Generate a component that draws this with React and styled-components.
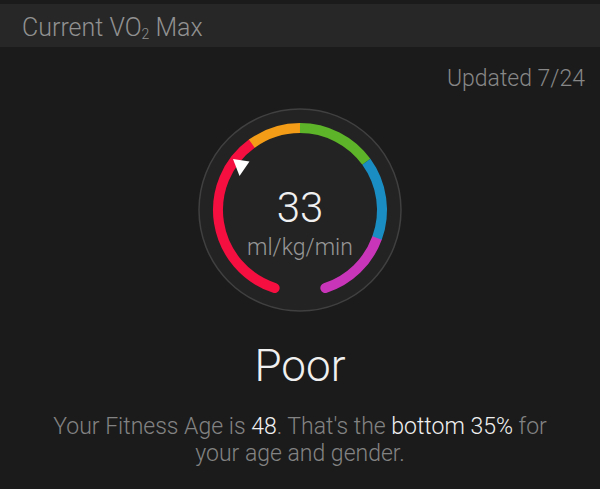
import React from 'react'
import styled, { createGlobalStyle } from 'styled-components'

const GlobalStyle = createGlobalStyle`
  html, body {
    margin: 0;
    padding: 0;
    background: #1b1b1b;
  }
  body {
    font-family: Roboto, 'Noto Sans', 'Liberation Sans', sans-serif;
    font-weight: 300;
    -webkit-font-smoothing: antialiased;
  }
`

const CX = 105
const CY = 105
const R = 82

const point = (deg) => {
  const a = (deg * Math.PI) / 180
  return [CX + R * Math.sin(a), CY - R * Math.cos(a)]
}

const arcPath = (from, to) => {
  const [x1, y1] = point(from)
  const [x2, y2] = point(to)
  const large = to - from > 180 ? 1 : 0
  return `M ${x1.toFixed(2)} ${y1.toFixed(2)} A ${R} ${R} 0 ${large} 1 ${x2.toFixed(2)} ${y2.toFixed(2)}`
}

// zones clockwise from top, in degrees
const zones = [
  { from: -162, to: -36, color: '#f50f40', cap: 'round' },
  { from: 110, to: 162, color: '#c935b9', cap: 'round' },
  { from: -36, to: 0, color: '#f39c17', cap: 'butt' },
  { from: 0, to: 54, color: '#5db428', cap: 'butt' },
  { from: 54, to: 110, color: '#1a8ec3', cap: 'butt' },
]

const Page = styled.div`
  padding-top: 4px;
  width: 600px;
  min-height: 485px;
  background: #1b1b1b;
`

const Header = styled.header`
  box-sizing: border-box;
  height: 43px;
  padding: 12px 0 0 22px;
  background: #272727;
  color: #919191;
  font-size: 25px;
  line-height: 24px;

  sub {
    font-size: 14px;
    line-height: 0;
    vertical-align: -3px;
  }
`

const Updated = styled.div`
  margin-top: 19px;
  padding-right: 15px;
  text-align: right;
  color: #878787;
  font-size: 23px;
  line-height: 26px;
`

const Gauge = styled.div`
  display: grid;
  justify-content: center;
  margin-top: 13px;

  > * {
    grid-area: 1 / 1;
  }
`

const Readout = styled.div`
  align-self: start;
  padding-top: 82px;
  display: flex;
  flex-direction: column;
  align-items: center;
`

const Value = styled.div`
  color: #f0f0f0;
  font-size: 42px;
  line-height: 42px;
`

const Unit = styled.div`
  margin-top: 6px;
  color: #969696;
  font-size: 23px;
  line-height: 26px;
`

const Rating = styled.div`
  margin-top: 26px;
  text-align: center;
  color: #f0f0f0;
  font-size: 44px;
  line-height: 50px;
`

const Summary = styled.p`
  margin: 22px 0 0;
  padding: 0 46px;
  text-align: center;
  color: #838383;
  font-size: 23px;
  line-height: 27px;

  b {
    font-weight: 300;
    color: #f0f0f0;
  }
`

const Dial = () => (
  <svg width='210' height='210' viewBox='0 0 210 210'>
    <circle cx={CX} cy={CY} r='101' fill='#232323' stroke='#404040' strokeWidth='1.5' />
    {zones.map((z, index) => (
      <path
        key={index}
        d={arcPath(z.from, z.to)}
        fill='none'
        stroke={z.color}
        strokeWidth='10'
        strokeLinecap={z.cap}
      />
    ))}
    <polygon points='38,54 54.5,56.5 44.5,71' fill='#ffffff' />
  </svg>
)

const App = () => {
  return (
    <Page>
      <GlobalStyle />
      <Header>
        Current VO<sub>2</sub> Max
      </Header>
      <Updated>Updated 7/24</Updated>
      <Gauge>
        <Dial />
        <Readout>
          <Value>33</Value>
          <Unit>ml/kg/min</Unit>
        </Readout>
      </Gauge>
      <Rating>Poor</Rating>
      <Summary>
        Your Fitness Age is <b>48</b>. That's the <b>bottom 35%</b> for your age
        and gender.
      </Summary>
    </Page>
  )
}

export default App
